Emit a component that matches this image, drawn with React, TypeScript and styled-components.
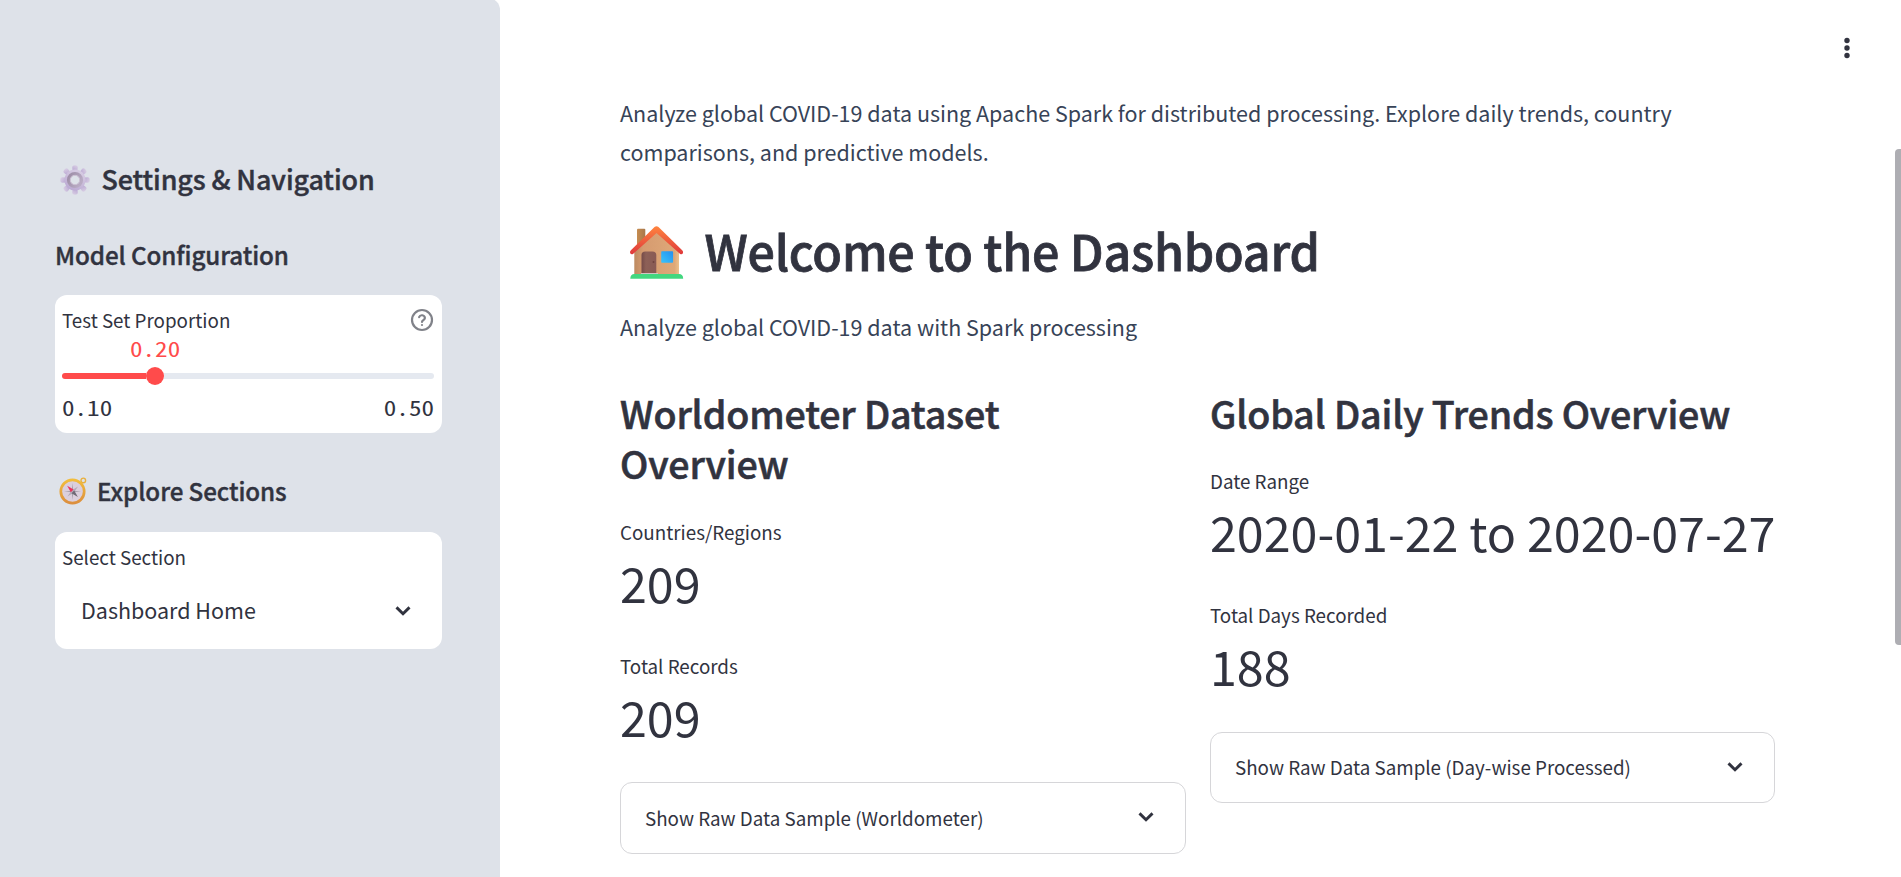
import React from "react";
import styled, { createGlobalStyle, css } from "styled-components";

const GlobalStyle = createGlobalStyle`
  * { box-sizing: border-box; }
  body {
    margin: 0;
    background: #fff;
    color: #31333f;
    font-family: "Noto Sans CJK JP", "Noto Sans CJK SC", "Noto Sans", sans-serif;
    overflow: hidden;
  }
  h1, h2, h3, p { margin: 0; }
`;

const semibold = css`
  font-weight: 500;
  letter-spacing: -0.004em;
  -webkit-text-stroke: 0.016em #31333f;
`;

const Page = styled.div`
  display: flex;
  position: relative;
  height: 877px;
  overflow: hidden;
`;

const Sidebar = styled.aside`
  flex: 0 0 500px;
  height: 879px;
  margin-top: -2px;
  padding: 162px 58px 0 55px;
  background: #dee2e9;
  border-top-right-radius: 12px;
`;

const SideTitle = styled.h2`
  display: flex;
  align-items: center;
  height: 40px;
  padding-left: 5px;
  gap: 11.5px;
  font-size: 26.9px;
  line-height: 36px;
  ${semibold}
  white-space: nowrap;

  span { margin-top: -2px; }
`;

const SideHeading = styled.h3<{ $top: number; $inset?: number }>`
  display: flex;
  align-items: center;
  gap: 10px;
  height: 32px;
  margin-top: ${(p) => p.$top}px;
  padding-left: ${(p) => p.$inset ?? 0}px;
  font-size: 24.2px;
  line-height: 32px;
  ${semibold}
  white-space: nowrap;
`;

const Card = styled.section<{ $top: number; $height: number }>`
  height: ${(p) => p.$height}px;
  margin-top: ${(p) => p.$top}px;
  padding: 12px 8px 0 7px;
  border-radius: 12px;
  background: #fff;
`;

const FieldLabel = styled.div`
  display: flex;
  justify-content: space-between;
  align-items: center;
  height: 26px;
  font-size: 18.8px;
  line-height: 26px;
`;

const Mono = styled.span`
  display: block;
  height: 24px;
  font-family: "Noto Sans Mono CJK JP", "Noto Sans Mono CJK SC", "Liberation Mono", monospace;
  font-size: 25.1px;
  line-height: 24px;
  transform: scaleY(0.84);
`;

const ValueRow = styled.div`
  display: flex;
  height: 24px;
  margin-top: 3px;
  padding-left: 68px;
  color: #ff4b4b;
`;

const Track = styled.div`
  display: flex;
  align-items: center;
  height: 18px;
  margin: 7px 0 0;
`;

const Filled = styled.div`
  width: 84px;
  height: 6px;
  border-radius: 3px 0 0 3px;
  background: #ff4b4b;
`;

const Thumb = styled.div`
  width: 18px;
  height: 18px;
  border-radius: 50%;
  background: #ff4b4b;
`;

const Rest = styled.div`
  flex: 1;
  height: 6px;
  border-radius: 0 3px 3px 0;
  background: #e5e9f0;
`;

const Limits = styled.div`
  display: flex;
  justify-content: space-between;
  height: 24px;
  margin-top: 10px;
`;

const Select = styled.div`
  display: flex;
  justify-content: space-between;
  align-items: center;
  height: 55px;
  margin-top: 12px;
  padding: 0 23px 0 19px;
  font-size: 21.5px;

  svg { margin-top: 2px; }
`;

const Main = styled.main`
  width: 1156px;
  margin-left: 120px;
  padding-top: 94px;
`;

const Paragraph = styled.p<{ $top?: number }>`
  margin-top: ${(p) => p.$top ?? 0}px;
  color: #374357;
  font-size: 21.5px;
  line-height: 38.6px;
`;

const Title = styled.h1`
  display: flex;
  align-items: center;
  gap: 19.5px;
  height: 65px;
  margin-top: 47px;
  padding-left: 9px;
  font-size: 48.4px;
  line-height: 65px;
  ${semibold}
  letter-spacing: -0.005em;
  white-space: nowrap;

  svg { margin-top: 3.6px; }
`;

const Columns = styled.div`
  display: grid;
  grid-template-columns: 566px 565px;
  gap: 24px;
  align-items: start;
  margin-top: 41.3px;
`;

const ColumnTitle = styled.h2`
  font-size: 37.6px;
  line-height: 50.4px;
  ${semibold}
`;

const Metric = styled.div<{ $top: number }>`
  margin-top: ${(p) => p.$top}px;
`;

const MetricLabel = styled.div`
  height: 24px;
  font-size: 18.8px;
  line-height: 24px;
`;

const MetricValue = styled.div`
  height: 60px;
  margin-top: 8px;
  font-size: 48.4px;
  line-height: 61px;
  white-space: nowrap;
`;

const Expander = styled.div`
  display: flex;
  justify-content: space-between;
  align-items: center;
  height: 71.2px;
  margin-top: 36.7px;
  padding: 0 31px 2px 24px;
  border: 1px solid #d6d6d9;
  border-radius: 12px;
  font-size: 18.8px;
`;

const MenuButton = styled.div`
  position: absolute;
  top: 36px;
  left: 1842px;
  line-height: 0;
`;

const ScrollThumb = styled.div`
  position: absolute;
  top: 149px;
  right: -3px;
  width: 9px;
  height: 496px;
  border-radius: 4px;
  background: #aeaeb3;
`;

const Chevron = () => (
  <svg width="16" height="12" viewBox="0 0 16 12" fill="none" stroke="#31333f" strokeWidth="2.9">
    <path d="M1.5 2.4 8 8.8l6.5-6.4" />
  </svg>
);

const Help = () => (
  <svg width="24" height="24" viewBox="0 0 24 24" fill="none" stroke="#808289" strokeWidth="2.2" strokeLinecap="round">
    <circle cx="12" cy="12" r="10" />
    <path d="M9.1 9.2a3 3 0 0 1 5.8.8c0 2-2.9 2.2-2.9 4" />
    <path d="M12 17h.01" />
  </svg>
);

const Gear = () => (
  <svg width="30" height="30" viewBox="0 0 30 30">
    <defs>
      <linearGradient id="gearBody" x1=".8" y1="0" x2=".3" y2="1">
        <stop offset="0" stopColor="#d9cfe4" />
        <stop offset="1" stopColor="#bba9d3" />
      </linearGradient>
      <linearGradient id="gearRing" x1="0" y1="0" x2="1" y2=".6">
        <stop offset="0" stopColor="#9c8ca5" />
        <stop offset="1" stopColor="#b9abc4" />
      </linearGradient>
    </defs>
    <g fill="url(#gearBody)">
      {[0, 45, 90, 135, 180, 225, 270, 315].map((a) => (
        <path key={a} transform={`rotate(${a} 15 15)`} d="M12.6 6 12.2 2Q12.3.2 15 .2T17.8 2L17.4 6z" />
      ))}
      <circle cx="15" cy="15" r="10.6" />
    </g>
    <circle cx="15" cy="15" r="6.4" fill="#dee2e9" stroke="url(#gearRing)" strokeWidth="3.4" />
    <circle cx="15" cy="15" r="4.7" fill="#dee2e9" stroke="#cbbfd2" strokeWidth="1" />
  </svg>
);

const Compass = () => (
  <svg width="28" height="28" viewBox="0 0 28 28">
    <defs>
      <linearGradient id="brass" x1="0" y1="0" x2="0" y2="1">
        <stop offset="0" stopColor="#f2bd3c" />
        <stop offset="1" stopColor="#dc8f3e" />
      </linearGradient>
    </defs>
    <circle cx="24.3" cy="3.4" r="2.3" fill="none" stroke="#e8b03e" strokeWidth="1.4" />
    <circle cx="13.5" cy="14.5" r="11.7" fill="#dbcfdd" stroke="url(#brass)" strokeWidth="2.7" />
    <path d="m13.5 6 .8 7.700 7.700.8-7.700.8-.8 7.700-.8-7.700L5 14.500l7.700-.8z" fill="#a69fab" />
    <path d="m8.500 19.500 4-6 6.500-4-4 6z" fill="#b3abb8" />
    <path d="m8.200 8.800 6.300 3.800-2.700 2.700z" fill="#ed315d" />
    <path d="m18.900 19.900-6.400-3.700 2.700-2.700z" fill="#6e6875" />
  </svg>
);

const House = () => (
  <svg width="56" height="55.3" viewBox="0 0 56 58" preserveAspectRatio="none">
    <defs>
      <linearGradient id="wall" x1="0" y1="0" x2="1" y2="0">
        <stop offset="0" stopColor="#bd8a60" />
        <stop offset=".2" stopColor="#d69b70" />
        <stop offset=".9" stopColor="#dea878" />
        <stop offset="1" stopColor="#ecc08c" />
      </linearGradient>
      <linearGradient id="roof" x1="0" y1="0" x2="0" y2="1">
        <stop offset="0" stopColor="#ff853f" />
        <stop offset="1" stopColor="#df383b" />
      </linearGradient>
      <linearGradient id="chimney" x1="0" y1="0" x2="1" y2="0">
        <stop offset="0" stopColor="#c68c50" />
        <stop offset="1" stopColor="#a8774b" />
      </linearGradient>
      <linearGradient id="pane" x1="0" y1="1" x2="1" y2="0">
        <stop offset="0" stopColor="#39c4fb" />
        <stop offset="1" stopColor="#268ff0" />
      </linearGradient>
      <linearGradient id="door" x1="0" y1="0" x2="1" y2="0">
        <stop offset="0" stopColor="#744a48" />
        <stop offset=".3" stopColor="#8d6057" />
        <stop offset="1" stopColor="#895a54" />
      </linearGradient>
    </defs>
    <rect x="8" y="4" width="8.300" height="22" rx="1" fill="url(#chimney)" />
    <path d="M5.300 27 27.500 5.500 50 27v24.500H5.300z" fill="url(#wall)" />
    <path d="M25.500 2.200q2-2 4 0L53.200 26.500q1.200 1.200.8 2.800-.8 2-2.800 1.200L27.500 8.500 4 30.500q-2 .8-2.900-1.200-.4-1.600.8-2.800z" fill="url(#roof)" />
    <path d="M12.500 51V31.500q0-3.800 3.800-3.800h7.200q3.800 0 3.800 3.800V51z" fill="url(#door)" />
    <circle cx="24.500" cy="38.800" r="1" fill="#6e423f" />
    <path d="M12 50.500h17v1.500H12z" fill="#d5d0d4" />
    <rect x="32.200" y="27.600" width="11.900" height="12" rx=".8" fill="url(#pane)" />
    <path d="M1.300 56.300q.2-4.800 4-4.800h44.800q3.900 0 4.100 4.800z" fill="#43d77f" />
  </svg>
);

const Dots = () => (
  <svg width="10" height="25" viewBox="0 0 10 25" fill="#31333f">
    <circle cx="5" cy="4.500" r="2.700" />
    <circle cx="5" cy="12" r="2.700" />
    <circle cx="5" cy="19.500" r="2.700" />
  </svg>
);

export default function App() {
  return (
    <>
      <GlobalStyle />
      <Page>
        <Sidebar>
          <SideTitle>
            <Gear />
            <span>Settings &amp; Navigation</span>
          </SideTitle>
          <SideHeading $top={39}>Model Configuration</SideHeading>
          <Card $top={24} $height={138}>
            <FieldLabel>
              Test Set Proportion
              <Help />
            </FieldLabel>
            <ValueRow>
              <Mono>0.20</Mono>
            </ValueRow>
            <Track>
              <Filled />
              <Thumb />
              <Rest />
            </Track>
            <Limits>
              <Mono>0.10</Mono>
              <Mono>0.50</Mono>
            </Limits>
          </Card>
          <SideHeading $top={42} $inset={4}>
            <Compass />
            Explore Sections
          </SideHeading>
          <Card $top={25} $height={117}>
            <FieldLabel>Select Section</FieldLabel>
            <Select>
              Dashboard Home
              <Chevron />
            </Select>
          </Card>
        </Sidebar>
        <Main>
          <Paragraph>
            Analyze global COVID-19 data using Apache Spark for distributed processing. Explore daily trends, country
            comparisons, and predictive models.
          </Paragraph>
          <Title>
            <House />
            Welcome to the Dashboard
          </Title>
          <Paragraph $top={25}>Analyze global COVID-19 data with Spark processing</Paragraph>
          <Columns>
            <section>
              <ColumnTitle>
                Worldometer Dataset
                <br />
                Overview
              </ColumnTitle>
              <Metric $top={30.9}>
                <MetricLabel>Countries/Regions</MetricLabel>
                <MetricValue>209</MetricValue>
              </Metric>
              <Metric $top={42}>
                <MetricLabel>Total Records</MetricLabel>
                <MetricValue>209</MetricValue>
              </Metric>
              <Expander>
                Show Raw Data Sample (Worldometer)
                <Chevron />
              </Expander>
            </section>
            <section>
              <ColumnTitle>Global Daily Trends Overview</ColumnTitle>
              <Metric $top={30.9}>
                <MetricLabel>Date Range</MetricLabel>
                <MetricValue>2020-01-22 to 2020-07-27</MetricValue>
              </Metric>
              <Metric $top={42}>
                <MetricLabel>Total Days Recorded</MetricLabel>
                <MetricValue>188</MetricValue>
              </Metric>
              <Expander>
                Show Raw Data Sample (Day-wise Processed)
                <Chevron />
              </Expander>
            </section>
          </Columns>
        </Main>
        <MenuButton>
          <Dots />
        </MenuButton>
        <ScrollThumb />
      </Page>
    </>
  );
}
